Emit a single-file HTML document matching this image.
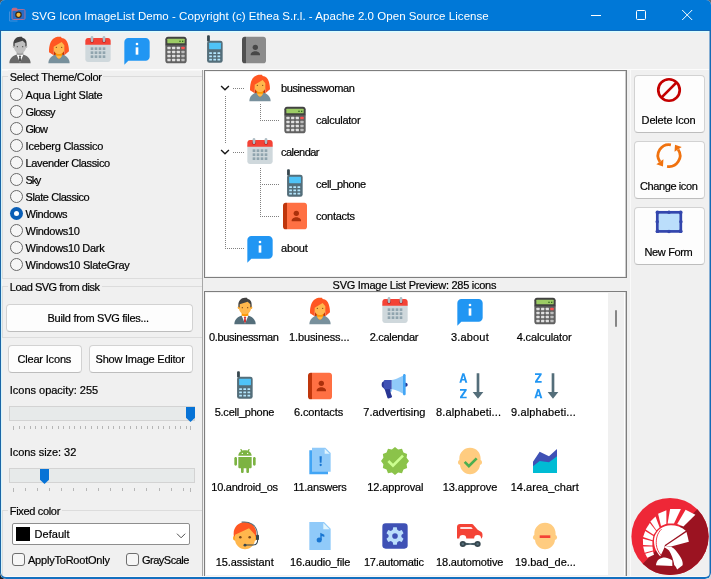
<!DOCTYPE html>
<html><head><meta charset="utf-8"><title>SVG Icon ImageList Demo</title>
<style>
html,body{margin:0;padding:0;background:#3b4652;}
body{width:711px;height:579px;overflow:hidden;font-family:"Liberation Sans",sans-serif;}
#win{position:absolute;left:0;top:0;width:711px;height:579px;background:#f0f0f0;border-radius:5px 5px 6px 6px;overflow:hidden;}
.t{position:absolute;white-space:nowrap;opacity:.999;-webkit-text-stroke:0.2px currentColor;font-family:"Liberation Sans",sans-serif;}
svg{overflow:visible}
</style></head><body>
<div style="position:absolute;left:0;top:0;width:8px;height:8px;background:#4a5a66"></div><div style="position:absolute;left:703px;top:0;width:8px;height:8px;background:#5a6a78"></div><div style="position:absolute;left:0;top:571px;width:8px;height:8px;background:#1c2228"></div><div style="position:absolute;left:703px;top:571px;width:8px;height:8px;background:#cfd6dd"></div>
<svg width="0" height="0" style="position:absolute"><defs>
<symbol id="i-businessman" viewBox="0 0 48 48"><polygon fill="#FF9800" points="24,37 19,31 19,25 29,25 29,31"/>
<g fill="#FFA726"><circle cx="33" cy="19" r="2"/><circle cx="15" cy="19" r="2"/></g>
<path fill="#FFB74D" d="M33,13c0-7.600-18-5-18,0c0,1.100,0,5.900,0,7c0,5,4,9,9,9s9-4,9-9C33,18.900,33,14.100,33,13z"/>
<path fill="#424242" d="M24,4c-6.100,0-10,4.900-10,11c0,0.800,0,2.300,0,2.300l2,1.700v-5l12-4l4,4v5l2-1.700c0,0,0-1.500,0-2.300c0-4-1-8-6-9l-1-2H24z"/>
<g fill="#784719"><circle cx="28" cy="19" r="1"/><circle cx="20" cy="19" r="1"/></g>
<polygon fill="#fff" points="24,43 19,31 24,32 29,31"/>
<polygon fill="#D32F2F" points="23,35 22.300,39.500 24,43.500 25.700,39.500 25,35 26,34 24,32 22,34"/>
<path fill="#546E7A" d="M29,31L29,31l-5,12l-5-12c0,0-11,2-11,13h32C40,33,29,31,29,31z"/></symbol>
<symbol id="i-businesswoman" viewBox="0 0 48 48"><path fill="#BF360C" d="M16,15h16v18H16z"/>
<path fill="#78909C" d="M40,44H8c0-11,11-13,11-13h10C29,31,40,33,40,44z"/>
<path fill="#FF9800" d="M24,37c-2.200,0-5-6-5-6v-6h10v6C29,31,26.200,37,24,37z"/>
<polygon fill="#FFB74D" points="19.500,32.500 28.500,32.500 27,35 24,37 21,35"/>
<path fill="#FFB74D" d="M33,14c0-7.600-18-5-18,0c0,1.100,0,5.900,0,7c0,5,4,9,9,9s9-4,9-9C33,19.900,33,15.100,33,14z"/>
<path fill="#FF5722" d="M24,4C17.900,4,9,7.400,9,27.300l7,4.700V19l12-7l4,5v15l7-6c0-4-0.700-20-11-20l-1-2H24z"/>
<g fill="#784719"><circle cx="28" cy="20" r="1"/><circle cx="20" cy="20" r="1"/></g></symbol>
<symbol id="i-calendar" viewBox="0 0 48 48"><path fill="#CFD8DC" d="M5,38V14h38v24c0,2.200-1.800,4-4,4H9C6.800,42,5,40.200,5,38z"/>
<path fill="#F44336" d="M43,10v6H5v-6c0-2.200,1.800-4,4-4h30C41.200,6,43,7.800,43,10z"/>
<g fill="#B71C1C"><circle cx="33" cy="10" r="3"/><circle cx="15" cy="10" r="3"/></g>
<g fill="#B0BEC5"><path d="M33,3c-1.100,0-2,0.900-2,2v5c0,1.100,0.900,2,2,2s2-0.900,2-2V5C35,3.900,34.100,3,33,3z"/><path d="M15,3c-1.100,0-2,0.900-2,2v5c0,1.100,0.900,2,2,2s2-0.900,2-2V5C17,3.900,16.100,3,15,3z"/></g>
<g fill="#90A4AE"><rect x="13" y="20" width="4" height="4"/><rect x="19" y="20" width="4" height="4"/><rect x="25" y="20" width="4" height="4"/><rect x="31" y="20" width="4" height="4"/><rect x="13" y="26" width="4" height="4"/><rect x="19" y="26" width="4" height="4"/><rect x="25" y="26" width="4" height="4"/><rect x="31" y="26" width="4" height="4"/><rect x="13" y="32" width="4" height="4"/><rect x="19" y="32" width="4" height="4"/><rect x="25" y="32" width="4" height="4"/><rect x="31" y="32" width="4" height="4"/></g></symbol>
<symbol id="i-about" viewBox="0 0 48 48"><path fill="#2196F3" d="M37,40H11l-6,6V12c0-3.300,2.700-6,6-6h26c3.300,0,6,2.700,6,6v22C43,37.300,40.300,40,37,40z"/>
<g fill="#fff"><rect x="22" y="20" width="4" height="11"/><circle cx="24" cy="15" r="2"/></g></symbol>
<symbol id="i-calculator" viewBox="0 0 48 48"><path fill="#616161" d="M40,16H8v24c0,2.200,1.800,4,4,4h24c2.200,0,4-1.800,4-4V16z"/>
<path fill="#424242" d="M36,4H12C9.800,4,8,5.800,8,8v9h32V8C40,5.800,38.200,4,36,4z"/>
<path fill="#9CCC65" d="M36,14H12c-0.600,0-1-0.400-1-1V8c0-0.600,0.400-1,1-1h24c0.600,0,1,0.400,1,1v5C37,13.600,36.600,14,36,14z"/>
<g fill="#33691E"><rect x="33" y="10" width="2" height="2"/><rect x="29" y="10" width="2" height="2"/></g>
<rect x="32" y="19" width="5" height="4" rx="1" fill="#FF5252"/>
<rect x="11.1" y="19.2" width="4.800" height="3.800" rx=".8" fill="#E0E0E0"/><rect x="18.1" y="19.2" width="4.800" height="3.800" rx=".8" fill="#E0E0E0"/><rect x="25.1" y="19.2" width="4.800" height="3.800" rx=".8" fill="#E0E0E0"/><rect x="11.1" y="25.2" width="4.800" height="3.800" rx=".8" fill="#E0E0E0"/><rect x="18.1" y="25.2" width="4.800" height="3.800" rx=".8" fill="#E0E0E0"/><rect x="25.1" y="25.2" width="4.800" height="3.800" rx=".8" fill="#E0E0E0"/><rect x="32.1" y="25.2" width="4.800" height="3.800" rx=".8" fill="#BDBDBD"/><rect x="11.1" y="31.2" width="4.800" height="3.800" rx=".8" fill="#E0E0E0"/><rect x="18.1" y="31.2" width="4.800" height="3.800" rx=".8" fill="#E0E0E0"/><rect x="25.1" y="31.2" width="4.800" height="3.800" rx=".8" fill="#E0E0E0"/><rect x="32.1" y="31.2" width="4.800" height="3.800" rx=".8" fill="#BDBDBD"/><rect x="11.1" y="37.2" width="4.800" height="3.800" rx=".8" fill="#E0E0E0"/><rect x="18.1" y="37.2" width="4.800" height="3.800" rx=".8" fill="#E0E0E0"/><rect x="25.1" y="37.2" width="4.800" height="3.800" rx=".8" fill="#E0E0E0"/><rect x="32.1" y="37.2" width="4.800" height="3.800" rx=".8" fill="#BDBDBD"/></symbol>
<symbol id="i-cell_phone" viewBox="0 0 48 48"><path fill="#37474F" d="M12.100,3.500c0-1,0.700-1.700,1.700-1.700h0.800c1,0,1.700,0.700,1.700,1.700V11h-4.200V3.500z"/>
<rect x="12.100" y="10.100" width="23.400" height="33.200" rx="3.500" fill="#546E7A"/>
<rect x="15.200" y="13.200" width="17.700" height="9.500" rx=".8" fill="#4FC3F7"/>
<g fill="#B3E5FC"><rect x="15.3" y="27.2" width="4.100" height="2.700" rx=".4"/><rect x="21.5" y="27.2" width="4.100" height="2.700" rx=".4"/><rect x="27.7" y="27.2" width="4.100" height="2.700" rx=".4"/><rect x="15.3" y="32.1" width="4.100" height="2.700" rx=".4"/><rect x="21.5" y="32.1" width="4.100" height="2.700" rx=".4"/><rect x="27.7" y="32.1" width="4.100" height="2.700" rx=".4"/><rect x="15.3" y="37" width="4.100" height="2.700" rx=".4"/><rect x="21.5" y="37" width="4.100" height="2.700" rx=".4"/><rect x="27.7" y="37" width="4.100" height="2.700" rx=".4"/></g></symbol>
<symbol id="i-contacts" viewBox="0 0 48 48"><path fill="#FF7043" d="M38,44H12V4h26c2.200,0,4,1.800,4,4v32C42,42.200,40.200,44,38,44z"/>
<path fill="#BF360C" d="M10,4h2v40h-2c-2.200,0-4-1.800-4-4V8C6,5.800,7.800,4,10,4z"/>
<g fill="#AB300B"><circle cx="26" cy="20" r="4"/><path d="M33,30c0,0-1.900-4-7-4c-5.100,0-7,4-7,4v2h14V30z"/></g></symbol>
<symbol id="i-advertising" viewBox="0 0 48 48"><path fill="#90CAF9" d="M17.400,33H15v-4h4l0.400,1.500C19.700,31.800,18.700,33,17.400,33z"/>
<path fill="#90CAF9" d="M37,36c0,0-11.800-7-18-7V15c5.800,0,18-7,18-7V36z"/>
<g fill="#283593"><circle cx="9" cy="22" r="5"/><path d="M40,19h-3v6h3c1.700,0,3-1.300,3-3S41.700,19,40,19z"/><path d="M18.600,41.200c-0.900,0.600-2.500,1.200-4.600,1.400c-0.600,0.100-1.200-0.300-1.400-1L8.200,27.900c0,0,8.800-6.200,8.800,1.100c0,5.500,1.500,8.400,2.200,9.500C19.800,39.500,19.500,40.600,18.600,41.200z"/></g>
<path fill="#3F51B5" d="M9,29h10V15H9c-1.100,0-2,0.900-2,2v10C7,28.100,7.900,29,9,29z"/>
<path fill="#42A5F5" d="M38,38L38,38c-1.100,0-2-0.900-2-2V8c0-1.100,0.900-2,2-2h0c1.100,0,2,0.900,2,2v28C40,37.100,39.100,38,38,38z"/></symbol>
<symbol id="i-sort_az" viewBox="0 0 48 48"><polygon fill="#546E7A" points="38,33 38,5 34,5 34,33 28,33 36,43 44,33"/><g fill="#2196F3" fill-rule="evenodd"><path d="M8,19L12.500,5H15.500L20,19H16.900L16,15.900H12L11.100,19Z M12.700,13.500H15.300L14,8.800Z"/><path d="M9,28.500H19V30.800L12.700,40H19V42.500H9V40.200L15.300,31H9Z"/></g></symbol>
<symbol id="i-sort_za" viewBox="0 0 48 48"><polygon fill="#546E7A" points="38,33 38,5 34,5 34,33 28,33 36,43 44,33"/><g fill="#2196F3" fill-rule="evenodd"><path transform="translate(0,23.500)" d="M8,19L12.500,5H15.500L20,19H16.900L16,15.900H12L11.100,19Z M12.700,13.500H15.300L14,8.800Z"/><path transform="translate(0,-23.500)" d="M9,28.500H19V30.800L12.700,40H19V42.500H9V40.200L15.300,31H9Z"/></g></symbol>
<symbol id="i-android_os" viewBox="0 0 48 48"><g fill="#7CB342"><path d="M12,29c0,1.100-0.900,2-2,2s-2-0.900-2-2v-9c0-1.100,0.900-2,2-2s2,0.900,2,2V29z"/>
<path d="M40,29c0,1.100-0.900,2-2,2s-2-0.900-2-2v-9c0-1.100,0.900-2,2-2s2,0.900,2,2V29z"/>
<path d="M22,40c0,1.100-0.900,2-2,2s-2-0.900-2-2v-9c0-1.100,0.900-2,2-2s2,0.900,2,2V40z"/>
<path d="M30,40c0,1.100-0.900,2-2,2s-2-0.900-2-2v-9c0-1.100,0.900-2,2-2s2,0.900,2,2V40z"/>
<path d="M14,18v15c0,1.100,0.900,2,2,2h16c1.100,0,2-0.900,2-2V18H14z"/>
<path d="M24,8c-6,0-9.700,3.600-10,8h20C33.700,11.600,30,8,24,8z M20,13.600c-0.600,0-1-0.400-1-1c0-0.600,0.400-1,1-1s1,0.400,1,1C21,13.100,20.600,13.600,20,13.600z M28,13.600c-0.600,0-1-0.400-1-1c0-0.600,0.400-1,1-1s1,0.400,1,1C29,13.100,28.600,13.600,28,13.600z"/></g>
<g stroke="#7CB342" stroke-width="2" stroke-linecap="round"><line x1="30" x2="28.300" y1="7" y2="9.500"/><line x1="18" x2="19.700" y1="7" y2="9.500"/></g></symbol>
<symbol id="i-answers" viewBox="0 0 48 48"><polygon fill="#42A5F5" points="36,44 8,44 8,8 28,8 36,16"/>
<polygon fill="#90CAF9" points="40,40 12,40 12,4 32,4 40,12"/>
<polygon fill="#E1F5FE" points="38.500,13 31,13 31,5.500"/>
<g fill="#1976D2"><circle cx="25" cy="30" r="1.700"/><path d="M26.300,26.800h-2.600L23.300,17h3.400L26.300,26.800z"/></g></symbol>
<symbol id="i-approval" viewBox="0 0 48 48"><polygon fill="#8BC34A" points="24,3 28.700,6.600 34.500,5.800 36.700,11.300 42.200,13.500 41.400,19.300 45,24 41.400,28.700 42.200,34.500 36.700,36.700 34.500,42.200 28.700,41.400 24,45 19.300,41.400 13.500,42.200 11.300,36.700 5.800,34.500 6.600,28.700 3,24 6.600,19.300 5.800,13.500 11.300,11.300 13.500,5.800 19.300,6.600"/>
<polygon fill="#CCFF90" points="34.600,14.600 21,28.200 15.400,22.600 12.600,25.400 21,33.800 37.400,17.400"/></symbol>
<symbol id="i-approve" viewBox="0 0 48 48"><g fill="#FFCC80"><circle cx="38" cy="26" r="4"/><circle cx="10" cy="26" r="4"/><path d="M39,19c0-12.700-30-8.300-30,0c0,1.800,0,8.200,0,10c0,8.300,6.700,15,15,15s15-6.700,15-15C39,27.200,39,20.800,39,19z"/><path d="M24,4C15.200,4,8,11.200,8,20c0,1.200,0,3.500,0,3.500l2.100,0.600V19l19.500-6.300l8.200,6.300v5.100l2.100-0.600c0,0,0-2.300,0-3.500C40,12.500,34.600,4,24,4z"/></g><polygon fill="#4CAF50" points="32.600,18.600 22.300,28.900 17.400,24 14.600,26.800 22.300,34.500 35.400,21.400"/></symbol>
<symbol id="i-bad_decision" viewBox="0 0 48 48"><g fill="#FFCC80"><circle cx="38" cy="26" r="4"/><circle cx="10" cy="26" r="4"/><path d="M39,19c0-12.700-30-8.300-30,0c0,1.800,0,8.200,0,10c0,8.300,6.700,15,15,15s15-6.700,15-15C39,27.200,39,20.800,39,19z"/><path d="M24,4C15.200,4,8,11.200,8,20c0,1.200,0,3.500,0,3.500l2.100,0.600V19l19.500-6.300l8.200,6.300v5.100l2.100-0.600c0,0,0-2.300,0-3.500C40,12.500,34.600,4,24,4z"/></g><rect x="16" y="23" width="16" height="4" fill="#F44336"/></symbol>
<symbol id="i-area_chart" viewBox="0 0 48 48"><polygon fill="#3F51B5" points="42,37 6,37 6,25 16,10 30,17 42,6"/>
<polygon fill="#00BCD4" points="42,42 6,42 6,32 16,24 30,26 42,17"/></symbol>
<symbol id="i-assistant" viewBox="0 0 48 48"><g fill="#FFA726"><circle cx="38" cy="27" r="4"/><circle cx="10" cy="27" r="4"/></g>
<path fill="#FFB74D" d="M39,19c0-12.700-30-8.300-30,0c0,1.800,0,8.200,0,10c0,8.300,6.700,15,15,15s15-6.700,15-15C39,27.200,39,20.800,39,19z"/>
<path fill="#FF5722" d="M24,3C14.600,3,7,10.600,7,20c0,1.200,0,3.400,0,3.400L9,25v-3l21-9.800l9,9.800v3l2-1.600c0,0,0-2.100,0-3.400C41,12,35.300,3,24,3z"/>
<g fill="#784719"><circle cx="31" cy="26" r="1.900"/><circle cx="17" cy="26" r="1.900"/></g>
<path fill="none" stroke="#546E7A" stroke-width="1.600" d="M19,3.200c10-1.500,24,3,23.500,19.500"/>
<rect x="40.500" y="22" width="4.500" height="8" rx="1.200" fill="#37474F"/>
<path fill="none" stroke="#37474F" stroke-width="1.600" d="M43,29.500c0,5-3,8-7,8h-11"/>
<circle cx="24" cy="37.700" r="2.200" fill="#37474F"/></symbol>
<symbol id="i-audio_file" viewBox="0 0 48 48"><polygon fill="#90CAF9" points="40,45 8,45 8,3 30,3 40,13"/>
<polygon fill="#E1F5FE" points="38.500,14 29,14 29,4.500"/>
<g fill="#1976D2"><circle cx="22.800" cy="30" r="3.800"/><polygon points="24.400,30 24.400,19.300 30.500,22 30.500,25.600 26.600,24 26.600,30"/></g></symbol>
<symbol id="i-automatic" viewBox="0 0 48 48"><rect x="5" y="5" width="38" height="38" rx="5" fill="#3F51B5"/>
<path fill="#BBDEFB" fill-rule="evenodd" d="M20.58,14.81 L21.33,10.77 L26.67,10.77 L27.42,14.81 L30.25,16.45 L34.13,15.07 L36.79,19.69 L33.66,22.37 L33.66,25.63 L36.79,28.31 L34.13,32.93 L30.25,31.55 L27.42,33.19 L26.67,37.23 L21.33,37.23 L20.58,33.19 L17.75,31.55 L13.87,32.93 L11.21,28.31 L14.34,25.63 L14.34,22.37 L11.21,19.69 L13.87,15.07 L17.75,16.45Z M28.2,24 A4.2,4.2 0 1,0 19.8,24 A4.2,4.2 0 1,0 28.2,24Z"/></symbol>
<symbol id="i-automotive" viewBox="0 0 48 48"><path fill="#F44336" d="M4.500,27.700V10.500c0-3,1.800-4.500,4.500-4.500H26c1.500,0,2.500,0.500,3.500,1.700L35.500,14.500L40.500,17.500c1.500,1,2.200,2.500,2.200,4V25L41.200,27.700H40.600a5.200,5.200 0 0 0 -10.400,0H18.400a5.200,5.200 0 0 0 -10.400,0Z"/>
<path fill="#FFE3E3" d="M9.500,10.600H26l2.200,3H9.500z"/>
<path d="M13,33.800L24.300,34.700L35.400,33.800V38.200L24.300,37.300L13,38.200Z" fill="#455A64"/>
<g fill="#37474F"><circle cx="13.200" cy="36" r="4.600"/><circle cx="35.400" cy="36" r="4.600"/></g>
<g fill="#546E7A"><circle cx="13.200" cy="36" r="1.800"/><circle cx="35.400" cy="36" r="1.800"/></g></symbol>
</defs></svg>
<div id="win">
<div style="position:absolute;left:0px;top:0px;width:711px;height:30px;background:#0078D7"></div>
<div style="position:absolute;left:0px;top:30px;width:711px;height:1px;background:#1a68b0"></div>
<div style="position:absolute;left:1px;top:31px;width:709px;height:1px;background:#d8ffff"></div>
<div style="position:absolute;left:1px;top:32px;width:709px;height:1px;background:#e8f3f9"></div>
<svg style="position:absolute;left:8px;top:7px" width="18" height="16" viewBox="0 0 18 16">
<path d="M1.500,4.500v9.500h8" fill="none" stroke="#3f8fdc" stroke-width="1"/>
<path d="M4,2.500c0-.8.500-1.300,1.300-1.300h3.200l1.300,1.300h6c.8,0,1.200.5,1.200,1.200v7.600c0,.8-.5,1.200-1.200,1.200H5.200c-.8,0-1.200-.5-1.200-1.200z" fill="#2a6cc4" stroke="#a8709a" stroke-width="1"/>
<path d="M4,3.800V2.500c0-.8.500-1.300,1.300-1.300h3.200l1.300,1.300v1.300z" fill="#cf6878"/>
<circle cx="10.500" cy="7.800" r="3.300" fill="#3a2a1a"/>
<circle cx="10.500" cy="7.800" r="2.100" fill="#f6b93b"/>
</svg>
<span class="t" style="left:31.50px;top:10px;font-size:11.5px;line-height:12px;letter-spacing:0.048px;color:#fff;-webkit-text-stroke:0;">SVG Icon ImageList Demo - Copyright (c) Ethea S.r.l. - Apache 2.0 Open Source License</span>
<svg style="position:absolute;left:580px;top:0" width="131" height="31" viewBox="0 0 131 31" fill="none" stroke="#fff" stroke-width="1">
<path d="M11,15.500h10"/>
<rect x="56.500" y="10.500" width="9" height="9" rx="1"/>
<path d="M102.200,10l10,10M112.200,10l-10,10"/>
</svg>
<svg style="position:absolute;left:4px;top:34px;filter:grayscale(1);" width="32" height="32" viewBox="0 0 48 48"><use href="#i-businessman"/></svg>
<svg style="position:absolute;left:43px;top:34px;" width="32" height="32" viewBox="0 0 48 48"><use href="#i-businesswoman"/></svg>
<svg style="position:absolute;left:82px;top:34px;" width="32" height="32" viewBox="0 0 48 48"><use href="#i-calendar"/></svg>
<svg style="position:absolute;left:121px;top:34px;" width="32" height="32" viewBox="0 0 48 48"><use href="#i-about"/></svg>
<svg style="position:absolute;left:160px;top:34px;" width="32" height="32" viewBox="0 0 48 48"><use href="#i-calculator"/></svg>
<svg style="position:absolute;left:199px;top:34px;" width="32" height="32" viewBox="0 0 48 48"><use href="#i-cell_phone"/></svg>
<svg style="position:absolute;left:238px;top:34px;filter:grayscale(1);" width="32" height="32" viewBox="0 0 48 48"><use href="#i-contacts"/></svg>
<div style="position:absolute;left:1px;top:69px;width:709px;height:1px;background:#fcfcfc"></div>
<div style="position:absolute;left:1px;top:70px;width:202px;height:1px;background:#f7f7f7"></div>
<div style="position:absolute;left:202px;top:70px;width:1px;height:507px;background:#a8a8a8"></div>
<div style="position:absolute;left:630px;top:70px;width:1px;height:507px;background:#fafafa"></div>
<div style="position:absolute;left:2px;top:76px;width:200px;height:202px;border:1px solid #dcdcdc;border-bottom:none;border-right:none;box-sizing:border-box"></div>
<div style="position:absolute;left:8px;top:70px;width:95px;height:13px;background:#f0f0f0"></div>
<span class="t" style="left:9.70px;top:71px;font-size:11px;line-height:12px;letter-spacing:-0.276px;color:#000;">Select Theme/Color</span>
<div style="position:absolute;left:10px;top:88px;width:13px;height:13px;border-radius:50%;background:#f6f6f6;border:1px solid #6a6a6a;box-sizing:border-box"></div>
<span class="t" style="left:25.60px;top:89px;font-size:11px;line-height:12px;letter-spacing:-0.240px;color:#000;">Aqua Light Slate</span>
<div style="position:absolute;left:10px;top:105px;width:13px;height:13px;border-radius:50%;background:#f6f6f6;border:1px solid #6a6a6a;box-sizing:border-box"></div>
<span class="t" style="left:25.60px;top:106px;font-size:11px;line-height:12px;letter-spacing:-0.720px;color:#000;">Glossy</span>
<div style="position:absolute;left:10px;top:122px;width:13px;height:13px;border-radius:50%;background:#f6f6f6;border:1px solid #6a6a6a;box-sizing:border-box"></div>
<span class="t" style="left:25.60px;top:123px;font-size:11px;line-height:12px;letter-spacing:-0.867px;color:#000;">Glow</span>
<div style="position:absolute;left:10px;top:139px;width:13px;height:13px;border-radius:50%;background:#f6f6f6;border:1px solid #6a6a6a;box-sizing:border-box"></div>
<span class="t" style="left:25.60px;top:140px;font-size:11px;line-height:12px;letter-spacing:-0.240px;color:#000;">Iceberg Classico</span>
<div style="position:absolute;left:10px;top:156px;width:13px;height:13px;border-radius:50%;background:#f6f6f6;border:1px solid #6a6a6a;box-sizing:border-box"></div>
<span class="t" style="left:25.60px;top:157px;font-size:11px;line-height:12px;letter-spacing:-0.369px;color:#000;">Lavender Classico</span>
<div style="position:absolute;left:10px;top:173px;width:13px;height:13px;border-radius:50%;background:#f6f6f6;border:1px solid #6a6a6a;box-sizing:border-box"></div>
<span class="t" style="left:25.60px;top:174px;font-size:11px;line-height:12px;letter-spacing:-1.300px;color:#000;">Sky</span>
<div style="position:absolute;left:10px;top:190px;width:13px;height:13px;border-radius:50%;background:#f6f6f6;border:1px solid #6a6a6a;box-sizing:border-box"></div>
<span class="t" style="left:25.60px;top:191px;font-size:11px;line-height:12px;letter-spacing:-0.431px;color:#000;">Slate Classico</span>
<div style="position:absolute;left:10px;top:207px;width:13px;height:13px;border-radius:50%;background:#0a5eb5"></div>
<div style="position:absolute;left:14px;top:211px;width:5px;height:5px;border-radius:50%;background:#fff"></div>
<span class="t" style="left:25.60px;top:208px;font-size:11px;line-height:12px;letter-spacing:-0.433px;color:#000;">Windows</span>
<div style="position:absolute;left:10px;top:224px;width:13px;height:13px;border-radius:50%;background:#f6f6f6;border:1px solid #6a6a6a;box-sizing:border-box"></div>
<span class="t" style="left:25.60px;top:225px;font-size:11px;line-height:12px;letter-spacing:-0.325px;color:#000;">Windows10</span>
<div style="position:absolute;left:10px;top:241px;width:13px;height:13px;border-radius:50%;background:#f6f6f6;border:1px solid #6a6a6a;box-sizing:border-box"></div>
<span class="t" style="left:25.60px;top:242px;font-size:11px;line-height:12px;letter-spacing:-0.315px;color:#000;">Windows10 Dark</span>
<div style="position:absolute;left:10px;top:258px;width:13px;height:13px;border-radius:50%;background:#f6f6f6;border:1px solid #6a6a6a;box-sizing:border-box"></div>
<span class="t" style="left:25.60px;top:259px;font-size:11px;line-height:12px;letter-spacing:-0.256px;color:#000;">Windows10 SlateGray</span>
<div style="position:absolute;left:2px;top:278px;width:200px;height:1px;background:#dcdcdc"></div>
<div style="position:absolute;left:2px;top:286px;width:200px;height:52px;border:1px solid #dcdcdc;border-bottom:none;border-right:none;box-sizing:border-box"></div>
<div style="position:absolute;left:8px;top:280px;width:93.5px;height:13px;background:#f0f0f0"></div>
<span class="t" style="left:9.85px;top:281px;font-size:11px;line-height:12px;letter-spacing:-0.491px;color:#000;">Load SVG from disk</span>
<div style="position:absolute;left:6px;top:304px;width:187px;height:28px;background:#fdfdfd;border:1px solid #d2d2d2;border-bottom-color:#bdbdbd;border-radius:4px;box-sizing:border-box"></div>
<span class="t" style="left:47.50px;top:312px;font-size:11px;line-height:12px;letter-spacing:-0.273px;color:#000;">Build from SVG files...</span>
<div style="position:absolute;left:2px;top:337px;width:200px;height:1px;background:#dcdcdc"></div>
<div style="position:absolute;left:8px;top:345px;width:74px;height:28px;background:#fdfdfd;border:1px solid #d2d2d2;border-bottom-color:#bdbdbd;border-radius:4px;box-sizing:border-box"></div>
<span class="t" style="left:17.40px;top:353px;font-size:11px;line-height:12px;letter-spacing:-0.170px;color:#000;">Clear Icons</span>
<div style="position:absolute;left:89px;top:345px;width:104px;height:28px;background:#fdfdfd;border:1px solid #d2d2d2;border-bottom-color:#bdbdbd;border-radius:4px;box-sizing:border-box"></div>
<span class="t" style="left:95.60px;top:353px;font-size:11px;line-height:12px;letter-spacing:-0.225px;color:#000;">Show Image Editor</span>
<span class="t" style="left:9.80px;top:384px;font-size:11px;line-height:12px;letter-spacing:-0.018px;color:#000;">Icons opacity: 255</span>
<div style="position:absolute;left:9px;top:406px;width:186px;height:15px;background:#e7eaea;border:1px solid #d3d3d3;box-sizing:border-box"></div>
<svg style="position:absolute;left:186px;top:407px" width="9" height="15" viewBox="0 0 9 15"><path d="M0,0h9v10.800l-4.500,4.200L0,10.800z" fill="#0773d6"/></svg>
<div style="position:absolute;left:13px;top:426px;width:1px;height:4px;background:#b6b6b6"></div>
<div style="position:absolute;left:19px;top:426px;width:1px;height:3px;background:#b6b6b6"></div>
<div style="position:absolute;left:24px;top:426px;width:1px;height:3px;background:#b6b6b6"></div>
<div style="position:absolute;left:30px;top:426px;width:1px;height:3px;background:#b6b6b6"></div>
<div style="position:absolute;left:35px;top:426px;width:1px;height:3px;background:#b6b6b6"></div>
<div style="position:absolute;left:41px;top:426px;width:1px;height:3px;background:#b6b6b6"></div>
<div style="position:absolute;left:46px;top:426px;width:1px;height:3px;background:#b6b6b6"></div>
<div style="position:absolute;left:52px;top:426px;width:1px;height:3px;background:#b6b6b6"></div>
<div style="position:absolute;left:58px;top:426px;width:1px;height:3px;background:#b6b6b6"></div>
<div style="position:absolute;left:63px;top:426px;width:1px;height:3px;background:#b6b6b6"></div>
<div style="position:absolute;left:69px;top:426px;width:1px;height:3px;background:#b6b6b6"></div>
<div style="position:absolute;left:74px;top:426px;width:1px;height:3px;background:#b6b6b6"></div>
<div style="position:absolute;left:80px;top:426px;width:1px;height:3px;background:#b6b6b6"></div>
<div style="position:absolute;left:85px;top:426px;width:1px;height:3px;background:#b6b6b6"></div>
<div style="position:absolute;left:91px;top:426px;width:1px;height:3px;background:#b6b6b6"></div>
<div style="position:absolute;left:97px;top:426px;width:1px;height:3px;background:#b6b6b6"></div>
<div style="position:absolute;left:102px;top:426px;width:1px;height:3px;background:#b6b6b6"></div>
<div style="position:absolute;left:108px;top:426px;width:1px;height:3px;background:#b6b6b6"></div>
<div style="position:absolute;left:113px;top:426px;width:1px;height:3px;background:#b6b6b6"></div>
<div style="position:absolute;left:119px;top:426px;width:1px;height:3px;background:#b6b6b6"></div>
<div style="position:absolute;left:124px;top:426px;width:1px;height:3px;background:#b6b6b6"></div>
<div style="position:absolute;left:130px;top:426px;width:1px;height:3px;background:#b6b6b6"></div>
<div style="position:absolute;left:136px;top:426px;width:1px;height:3px;background:#b6b6b6"></div>
<div style="position:absolute;left:141px;top:426px;width:1px;height:3px;background:#b6b6b6"></div>
<div style="position:absolute;left:147px;top:426px;width:1px;height:3px;background:#b6b6b6"></div>
<div style="position:absolute;left:152px;top:426px;width:1px;height:3px;background:#b6b6b6"></div>
<div style="position:absolute;left:158px;top:426px;width:1px;height:3px;background:#b6b6b6"></div>
<div style="position:absolute;left:163px;top:426px;width:1px;height:3px;background:#b6b6b6"></div>
<div style="position:absolute;left:169px;top:426px;width:1px;height:3px;background:#b6b6b6"></div>
<div style="position:absolute;left:175px;top:426px;width:1px;height:3px;background:#b6b6b6"></div>
<div style="position:absolute;left:180px;top:426px;width:1px;height:3px;background:#b6b6b6"></div>
<div style="position:absolute;left:186px;top:426px;width:1px;height:3px;background:#b6b6b6"></div>
<div style="position:absolute;left:190px;top:426px;width:1px;height:4px;background:#b6b6b6"></div>
<span class="t" style="left:9.80px;top:446px;font-size:11px;line-height:12px;letter-spacing:-0.062px;color:#000;">Icons size: 32</span>
<div style="position:absolute;left:9px;top:468px;width:186px;height:15px;background:#e7eaea;border:1px solid #d3d3d3;box-sizing:border-box"></div>
<svg style="position:absolute;left:40px;top:469px" width="9" height="15" viewBox="0 0 9 15"><path d="M0,0h9v10.800l-4.500,4.200L0,10.800z" fill="#0773d6"/></svg>
<div style="position:absolute;left:13px;top:488px;width:1px;height:4px;background:#b6b6b6"></div>
<div style="position:absolute;left:25px;top:488px;width:1px;height:3px;background:#b6b6b6"></div>
<div style="position:absolute;left:37px;top:488px;width:1px;height:3px;background:#b6b6b6"></div>
<div style="position:absolute;left:49px;top:488px;width:1px;height:3px;background:#b6b6b6"></div>
<div style="position:absolute;left:61px;top:488px;width:1px;height:3px;background:#b6b6b6"></div>
<div style="position:absolute;left:73px;top:488px;width:1px;height:3px;background:#b6b6b6"></div>
<div style="position:absolute;left:86px;top:488px;width:1px;height:3px;background:#b6b6b6"></div>
<div style="position:absolute;left:98px;top:488px;width:1px;height:3px;background:#b6b6b6"></div>
<div style="position:absolute;left:110px;top:488px;width:1px;height:3px;background:#b6b6b6"></div>
<div style="position:absolute;left:122px;top:488px;width:1px;height:3px;background:#b6b6b6"></div>
<div style="position:absolute;left:134px;top:488px;width:1px;height:3px;background:#b6b6b6"></div>
<div style="position:absolute;left:146px;top:488px;width:1px;height:3px;background:#b6b6b6"></div>
<div style="position:absolute;left:159px;top:488px;width:1px;height:3px;background:#b6b6b6"></div>
<div style="position:absolute;left:171px;top:488px;width:1px;height:3px;background:#b6b6b6"></div>
<div style="position:absolute;left:183px;top:488px;width:1px;height:3px;background:#b6b6b6"></div>
<div style="position:absolute;left:190px;top:488px;width:1px;height:4px;background:#b6b6b6"></div>
<div style="position:absolute;left:2px;top:510px;width:200px;height:90px;border:1px solid #dcdcdc;border-bottom:none;border-right:none;box-sizing:border-box"></div>
<div style="position:absolute;left:8px;top:504px;width:53.5px;height:13px;background:#f0f0f0"></div>
<span class="t" style="left:9.80px;top:505px;font-size:11px;line-height:12px;letter-spacing:-0.330px;color:#000;">Fixed color</span>
<div style="position:absolute;left:12px;top:523px;width:178px;height:22px;background:#fff;border:1px solid #8e8e8e;border-radius:2px;box-sizing:border-box"></div>
<div style="position:absolute;left:16px;top:527px;width:14px;height:14px;background:#000"></div>
<span class="t" style="left:34.60px;top:528px;font-size:11px;line-height:12px;letter-spacing:0.033px;color:#000;">Default</span>
<svg style="position:absolute;left:176px;top:531.500px" width="10" height="8" viewBox="0 0 10 8"><path d="M1,1.700l4.100,4.100l4.100-4.100" fill="none" stroke="#505050" stroke-width="1"/></svg>
<div style="position:absolute;left:12px;top:553px;width:13px;height:13px;background:#f6f6f6;border:1px solid #6e6e6e;border-radius:3px;box-sizing:border-box"></div>
<span class="t" style="left:28.00px;top:554px;font-size:11px;line-height:12px;letter-spacing:-0.214px;color:#000;">ApplyToRootOnly</span>
<div style="position:absolute;left:126px;top:553px;width:13px;height:13px;background:#f6f6f6;border:1px solid #6e6e6e;border-radius:3px;box-sizing:border-box"></div>
<span class="t" style="left:142.00px;top:554px;font-size:11px;line-height:12px;letter-spacing:-0.500px;color:#000;">GrayScale</span>
<div style="position:absolute;left:204px;top:70px;width:423px;height:208px;background:#fff;border:1px solid #7e7e7e;box-sizing:border-box;box-shadow:inset 0 0 0 1px rgba(120,120,120,.10),inset -1px 0 0 rgba(120,120,120,.3)"></div>
<svg style="position:absolute;left:218.5px;top:82.5px" width="12" height="10" viewBox="0 0 12 10"><path d="M2.100,2.900l3.900,3.900l3.900-3.900" fill="none" stroke="#1a1a1a" stroke-width="1.400"/></svg>
<svg style="position:absolute;left:218.5px;top:146.5px" width="12" height="10" viewBox="0 0 12 10"><path d="M2.100,2.900l3.900,3.900l3.900-3.900" fill="none" stroke="#1a1a1a" stroke-width="1.400"/></svg>
<div style="position:absolute;left:225px;top:96px;width:1px;height:47px;background:repeating-linear-gradient(to bottom,#808080 0 1px,transparent 1px 2px)"></div>
<div style="position:absolute;left:225px;top:160px;width:1px;height:88px;background:repeating-linear-gradient(to bottom,#808080 0 1px,transparent 1px 2px)"></div>
<div style="position:absolute;left:233px;top:88px;width:11px;height:1px;background:repeating-linear-gradient(to right,#808080 0 1px,transparent 1px 2px)"></div>
<div style="position:absolute;left:233px;top:152px;width:11px;height:1px;background:repeating-linear-gradient(to right,#808080 0 1px,transparent 1px 2px)"></div>
<div style="position:absolute;left:225px;top:248px;width:19px;height:1px;background:repeating-linear-gradient(to right,#808080 0 1px,transparent 1px 2px)"></div>
<div style="position:absolute;left:260px;top:104px;width:1px;height:16px;background:repeating-linear-gradient(to bottom,#808080 0 1px,transparent 1px 2px)"></div>
<div style="position:absolute;left:260px;top:120px;width:19px;height:1px;background:repeating-linear-gradient(to right,#808080 0 1px,transparent 1px 2px)"></div>
<div style="position:absolute;left:260px;top:168px;width:1px;height:48px;background:repeating-linear-gradient(to bottom,#808080 0 1px,transparent 1px 2px)"></div>
<div style="position:absolute;left:260px;top:184px;width:19px;height:1px;background:repeating-linear-gradient(to right,#808080 0 1px,transparent 1px 2px)"></div>
<div style="position:absolute;left:260px;top:216px;width:19px;height:1px;background:repeating-linear-gradient(to right,#808080 0 1px,transparent 1px 2px)"></div>
<svg style="position:absolute;left:244px;top:72px;" width="32" height="32" viewBox="0 0 48 48"><use href="#i-businesswoman"/></svg>
<span class="t" style="left:281.00px;top:82px;font-size:11px;line-height:12px;letter-spacing:-0.417px;color:#000;">businesswoman</span>
<svg style="position:absolute;left:279px;top:104px;" width="32" height="32" viewBox="0 0 48 48"><use href="#i-calculator"/></svg>
<span class="t" style="left:316.00px;top:114px;font-size:11px;line-height:12px;letter-spacing:-0.278px;color:#000;">calculator</span>
<svg style="position:absolute;left:244px;top:136px;" width="32" height="32" viewBox="0 0 48 48"><use href="#i-calendar"/></svg>
<span class="t" style="left:281.00px;top:146px;font-size:11px;line-height:12px;letter-spacing:-0.529px;color:#000;">calendar</span>
<svg style="position:absolute;left:279px;top:168px;" width="32" height="32" viewBox="0 0 48 48"><use href="#i-cell_phone"/></svg>
<span class="t" style="left:316.00px;top:178px;font-size:11px;line-height:12px;letter-spacing:-0.333px;color:#000;">cell_phone</span>
<svg style="position:absolute;left:279px;top:200px;" width="32" height="32" viewBox="0 0 48 48"><use href="#i-contacts"/></svg>
<span class="t" style="left:316.00px;top:210px;font-size:11px;line-height:12px;letter-spacing:-0.286px;color:#000;">contacts</span>
<svg style="position:absolute;left:244px;top:232px;" width="32" height="32" viewBox="0 0 48 48"><use href="#i-about"/></svg>
<span class="t" style="left:281.00px;top:242px;font-size:11px;line-height:12px;letter-spacing:-0.175px;color:#000;">about</span>
<span class="t" style="left:332.60px;top:279px;font-size:11px;line-height:12px;letter-spacing:-0.269px;color:#000;">SVG Image List Preview: 285 icons</span>
<div style="position:absolute;left:204px;top:291px;width:423px;height:286px;background:#fff;border:1px solid #7e7e7e;box-sizing:border-box;box-shadow:inset 0 0 0 1px rgba(120,120,120,.10),inset -1px 0 0 rgba(120,120,120,.3)"></div>
<div style="position:absolute;left:608px;top:293px;width:16px;height:283px;background:#f0f0f0"></div>
<div style="position:absolute;left:615px;top:310px;width:2px;height:17px;background:#868686;border-radius:1px"></div>
<svg style="position:absolute;left:229px;top:295px;" width="32" height="32" viewBox="0 0 48 48"><use href="#i-businessman"/></svg>
<span class="t" style="left:209.00px;top:331px;font-size:11px;line-height:12px;letter-spacing:-0.333px;color:#000;">0.businessman</span>
<svg style="position:absolute;left:304px;top:295px;" width="32" height="32" viewBox="0 0 48 48"><use href="#i-businesswoman"/></svg>
<span class="t" style="left:289.00px;top:331px;font-size:11px;line-height:12px;letter-spacing:-0.108px;color:#000;">1.business...</span>
<svg style="position:absolute;left:379px;top:295px;" width="32" height="32" viewBox="0 0 48 48"><use href="#i-calendar"/></svg>
<span class="t" style="left:369.70px;top:331px;font-size:11px;line-height:12px;letter-spacing:-0.300px;color:#000;">2.calendar</span>
<svg style="position:absolute;left:454px;top:295px;" width="32" height="32" viewBox="0 0 48 48"><use href="#i-about"/></svg>
<span class="t" style="left:451.00px;top:331px;font-size:11px;line-height:12px;letter-spacing:0.167px;color:#000;">3.about</span>
<svg style="position:absolute;left:529px;top:295px;" width="32" height="32" viewBox="0 0 48 48"><use href="#i-calculator"/></svg>
<span class="t" style="left:516.70px;top:331px;font-size:11px;line-height:12px;letter-spacing:-0.127px;color:#000;">4.calculator</span>
<svg style="position:absolute;left:229px;top:370px;" width="32" height="32" viewBox="0 0 48 48"><use href="#i-cell_phone"/></svg>
<span class="t" style="left:214.70px;top:406px;font-size:11px;line-height:12px;letter-spacing:-0.245px;color:#000;">5.cell_phone</span>
<svg style="position:absolute;left:304px;top:370px;" width="32" height="32" viewBox="0 0 48 48"><use href="#i-contacts"/></svg>
<span class="t" style="left:294.00px;top:406px;font-size:11px;line-height:12px;letter-spacing:-0.111px;color:#000;">6.contacts</span>
<svg style="position:absolute;left:379px;top:370px;" width="32" height="32" viewBox="0 0 48 48"><use href="#i-advertising"/></svg>
<span class="t" style="left:363.30px;top:406px;font-size:11px;line-height:12px;letter-spacing:-0.025px;color:#000;">7.advertising</span>
<svg style="position:absolute;left:454px;top:370px;" width="32" height="32" viewBox="0 0 48 48"><use href="#i-sort_az"/></svg>
<span class="t" style="left:436.00px;top:406px;font-size:11px;line-height:12px;letter-spacing:0.154px;color:#000;">8.alphabeti...</span>
<svg style="position:absolute;left:529px;top:370px;" width="32" height="32" viewBox="0 0 48 48"><use href="#i-sort_za"/></svg>
<span class="t" style="left:511.00px;top:406px;font-size:11px;line-height:12px;letter-spacing:0.131px;color:#000;">9.alphabeti...</span>
<svg style="position:absolute;left:229px;top:445px;" width="32" height="32" viewBox="0 0 48 48"><use href="#i-android_os"/></svg>
<span class="t" style="left:211.30px;top:481px;font-size:11px;line-height:12px;letter-spacing:-0.250px;color:#000;">10.android_os</span>
<svg style="position:absolute;left:304px;top:445px;" width="32" height="32" viewBox="0 0 48 48"><use href="#i-answers"/></svg>
<span class="t" style="left:293.30px;top:481px;font-size:11px;line-height:12px;letter-spacing:-0.222px;color:#000;">11.answers</span>
<svg style="position:absolute;left:379px;top:445px;" width="32" height="32" viewBox="0 0 48 48"><use href="#i-approval"/></svg>
<span class="t" style="left:367.30px;top:481px;font-size:11px;line-height:12px;letter-spacing:-0.130px;color:#000;">12.approval</span>
<svg style="position:absolute;left:454px;top:445px;" width="32" height="32" viewBox="0 0 48 48"><use href="#i-approve"/></svg>
<span class="t" style="left:442.70px;top:481px;font-size:11px;line-height:12px;letter-spacing:-0.044px;color:#000;">13.approve</span>
<svg style="position:absolute;left:529px;top:445px;" width="32" height="32" viewBox="0 0 48 48"><use href="#i-area_chart"/></svg>
<span class="t" style="left:510.70px;top:481px;font-size:11px;line-height:12px;letter-spacing:0.025px;color:#000;">14.area_chart</span>
<svg style="position:absolute;left:229px;top:520px;" width="32" height="32" viewBox="0 0 48 48"><use href="#i-assistant"/></svg>
<span class="t" style="left:215.70px;top:556px;font-size:11px;line-height:12px;letter-spacing:-0.064px;color:#000;">15.assistant</span>
<svg style="position:absolute;left:304px;top:520px;" width="32" height="32" viewBox="0 0 48 48"><use href="#i-audio_file"/></svg>
<span class="t" style="left:290.00px;top:556px;font-size:11px;line-height:12px;letter-spacing:-0.167px;color:#000;">16.audio_file</span>
<svg style="position:absolute;left:379px;top:520px;" width="32" height="32" viewBox="0 0 48 48"><use href="#i-automatic"/></svg>
<span class="t" style="left:364.00px;top:556px;font-size:11px;line-height:12px;letter-spacing:-0.273px;color:#000;">17.automatic</span>
<svg style="position:absolute;left:454px;top:520px;" width="32" height="32" viewBox="0 0 48 48"><use href="#i-automotive"/></svg>
<span class="t" style="left:436.00px;top:556px;font-size:11px;line-height:12px;letter-spacing:-0.142px;color:#000;">18.automotive</span>
<svg style="position:absolute;left:529px;top:520px;" width="32" height="32" viewBox="0 0 48 48"><use href="#i-bad_decision"/></svg>
<span class="t" style="left:515.00px;top:556px;font-size:11px;line-height:12px;letter-spacing:-0.027px;color:#000;">19.bad_de...</span>
<div style="position:absolute;left:634px;top:75px;width:71px;height:58px;background:#fdfdfd;border:1px solid #d2d2d2;border-bottom-color:#bdbdbd;border-radius:4px;box-sizing:border-box"></div>
<span class="t" style="left:641.60px;top:114px;font-size:11px;line-height:12px;letter-spacing:-0.160px;color:#000;">Delete Icon</span>
<div style="position:absolute;left:634px;top:141px;width:71px;height:58px;background:#fdfdfd;border:1px solid #d2d2d2;border-bottom-color:#bdbdbd;border-radius:4px;box-sizing:border-box"></div>
<span class="t" style="left:640.00px;top:180px;font-size:11px;line-height:12px;letter-spacing:-0.400px;color:#000;">Change icon</span>
<div style="position:absolute;left:634px;top:207px;width:71px;height:58px;background:#fdfdfd;border:1px solid #d2d2d2;border-bottom-color:#bdbdbd;border-radius:4px;box-sizing:border-box"></div>
<span class="t" style="left:644.50px;top:246px;font-size:11px;line-height:12px;letter-spacing:-0.357px;color:#000;">New Form</span>
<svg style="position:absolute;left:0;top:0" width="711" height="579" viewBox="0 0 711 579"><g fill="none" stroke="#c40000" stroke-width="2.700"><circle cx="669" cy="90" r="10.750"/><path d="M661.400,97.600L676.600,82.400"/></g></svg>
<svg style="position:absolute;left:0;top:0" width="711" height="579" viewBox="0 0 711 579"><path d="M670.91,144.77A11.0,11.0 0 0 0 659.88,161.75" fill="none" stroke="#F0720F" stroke-width="2.800"/><polygon fill="#F0720F" points="656.32,164.16 663.45,159.35 663.01,166.39"/><path d="M667.09,166.43A11.0,11.0 0 0 0 678.12,149.45" fill="none" stroke="#F0720F" stroke-width="2.800"/><polygon fill="#F0720F" points="681.68,147.04 674.55,151.85 674.99,144.81"/></svg>
<svg style="position:absolute;left:0;top:0" width="711" height="579" viewBox="0 0 711 579"><rect x="657.300" y="212.300" width="23.500" height="19.100" fill="#BBDEFB" stroke="#3346ad" stroke-width="2.700"/><g fill="#3346ad"><circle cx="657.500" cy="212.500" r="1.900"/><circle cx="680.600" cy="212.500" r="1.900"/><circle cx="657.500" cy="231.200" r="1.900"/><circle cx="680.600" cy="231.200" r="1.900"/><circle cx="669" cy="212.200" r="1.800"/><circle cx="669" cy="231.500" r="1.800"/><circle cx="657.200" cy="221.800" r="1.700"/><circle cx="680.900" cy="221.800" r="1.700"/></g></svg>
<svg style="position:absolute;left:0;top:0" width="711" height="579" viewBox="0 0 711 579">
<defs><clipPath id="lc"><circle cx="670" cy="536.500" r="38.600"/></clipPath></defs>
<g clip-path="url(#lc)"><rect x="630" y="497" width="81" height="80" fill="#ee2737"/><polygon points="711,495.500 711,580 626.500,580" fill="#9b1321"/></g>
<g fill="#fff"><polygon points="685.6,509.7 695.4,514.8 683.4,526.6 677.2,523.9"/><polygon points="670.1,509.1 680.9,509.1 674.0,523.4 667.6,523.6"/><polygon points="658.1,513.8 666.4,510.2 666.4,523.7 661.0,526.0"/><polygon points="650.4,521.6 655.5,516.4 659.6,527.4 656.4,530.2"/><polygon points="645.7,529.4 649.8,523.1 656.2,531.0 653.6,534.8"/><polygon points="643.1,537.1 645.2,530.9 653.3,536.1 652.6,540.2"/><polygon points="643.1,544.9 642.9,538.7 652.4,541.3 652.4,545.4"/><polygon points="644.7,552.7 643.1,546.5 652.4,546.5 653,550.6"/><polygon points="647.3,557.8 645.2,553.7 653,551.6 654,554.7"/>
<path d="M654,541C654,534 658.500,528.500 665,526.200C671,524.300 680,525.500 685.800,530.700L664.900,544.900L664.400,547.500C663,551 661.500,554 660.200,556.200C656.500,552.500 654,547 654,541Z"/>
<polygon points="665.900,545.800 686.500,532 688.900,541.800 671.100,546.400"/>
<path d="M665.400,546.100L671.100,546.800C673.500,548 674.500,549 675.800,550.600C678.500,554 680.500,557 681.500,558.900C682.600,561.500 683,563.500 682.600,565.300L677.100,569.500C676.500,567.500 675.500,566.500 674.200,565C673.800,562 673,559.500 672.100,556.800C671.200,554.500 670.300,552.500 669,550.600C667.500,549 666,548.300 664.400,547.500Z"/>
<path d="M655.900,565.300C656.200,562.500 657.300,560.500 659,559.200C661,557.800 663,557.300 665,557.400C668,557.800 670.500,559 672.300,560.500L672.300,565.900Z"/>
</g>
<path d="M661.500,529.200C657.300,533 655.900,538.500 656.300,544.500C656.700,548.500 658.300,552 660.900,555" fill="none" stroke="#ee2737" stroke-width="0.900"/>
</svg>
<div style="position:absolute;left:1px;top:31px;width:1px;height:546px;background:#d8f4fb"></div>
<div style="position:absolute;left:709px;top:31px;width:1px;height:546px;background:#86aed3"></div>
<div style="position:absolute;left:2px;top:576px;width:707px;height:1px;background:#f8f8f8"></div>
<div style="position:absolute;left:0;top:30px;width:711px;height:549px;box-sizing:border-box;border-radius:0 0 6px 6px;border-left:1px solid #1b66a6;border-right:1px solid #146bb6;border-bottom:2px solid #1470bf;border-top:0"></div>
</div>
</body></html>
